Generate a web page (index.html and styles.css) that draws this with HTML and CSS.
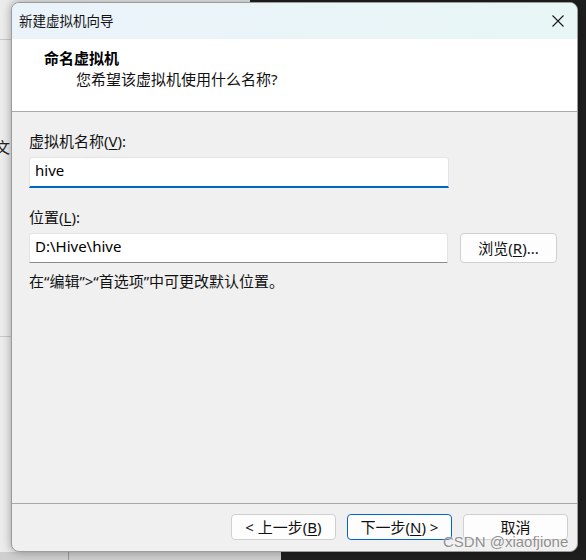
FILE: index.html
```html
<!DOCTYPE html>
<html lang="zh-CN">
<head>
<meta charset="utf-8">
<title>新建虚拟机向导</title>
<link rel="stylesheet" href="styles.css">
</head>
<body>
<div class="desktop">
  <span class="bg-char">文</span>
  <div class="dialog">
    <div class="titlebar">
      <span class="title">新建虚拟机向导</span>
      <svg class="close" width="12" height="12" viewBox="0 0 12 12"><path d="M0.5 0.5L11.5 11.5M11.5 0.5L0.5 11.5" stroke="#1a1a1a" stroke-width="1.1" fill="none"/></svg>
    </div>
    <div class="header">
      <div class="h-title">命名虚拟机</div>
      <div class="h-sub">您希望该虚拟机使用什么名称?</div>
    </div>
    <div class="content">
      <div class="field-label">虚拟机名称(<u>V</u>):</div>
      <div class="input input-active">hive</div>
      <div class="field-label loc-label">位置(<u>L</u>):</div>
      <div class="loc-row">
        <div class="input input-loc">D:\Hive\hive</div>
        <div class="btn btn-browse">浏览(<u>R</u>)...</div>
      </div>
      <div class="hint">在“编辑”&gt;“首选项”中可更改默认位置。</div>
    </div>
    <div class="footer">
      <div class="btn btn-foot">&lt; 上一步(<u>B</u>)</div>
      <div class="btn btn-foot btn-default">下一步(<u>N</u>) &gt;</div>
      <div class="btn btn-foot">取消</div>
    </div>
  </div>
  <div class="watermark">CSDN @xiaofjione</div>
</div>
</body>
</html>
```

FILE: styles.css
```css
* { box-sizing: border-box; }
html, body { margin: 0; padding: 0; }
body {
  font-family: "Noto Sans", "Noto Sans CJK SC", sans-serif;
  font-size: 15px;
  color: #000;
}
.desktop {
  position: relative;
  width: 586px;
  height: 560px;
  overflow: hidden;
  padding: 2px 0 0 11px;
  background:
    linear-gradient(#9a9a9a, #9a9a9a) 68px 552px / 1px 8px no-repeat,
    linear-gradient(#cfcfcf, #cfcfcf) 0 552px / 281px 8px no-repeat,
    linear-gradient(#c9c9c9, #c9c9c9) 0 39px / 12px 1px no-repeat,
    linear-gradient(#c9c9c9, #c9c9c9) 0 336px / 12px 1px no-repeat,
    linear-gradient(#ececec, #ececec) 0 0 / 250px 552px no-repeat,
    #1f1f1f;
}
.bg-char {
  position: absolute;
  left: -5px;
  top: 137px;
  font-family: "Noto Sans CJK SC", sans-serif;
  font-size: 15px;
  line-height: 20px;
  color: #222;
}
.dialog {
  position: relative;
  width: 567px;
  height: 550px;
  border: 1px solid #9c9c9c;
  border-radius: 8px;
  background: #f0f0f0;
  box-shadow: 0 0 10px rgba(0, 0, 0, 0.35);
  display: flex;
  flex-direction: column;
  overflow: hidden;
}
.titlebar {
  height: 36px;
  flex: none;
  display: flex;
  align-items: center;
  justify-content: space-between;
  padding: 0 13px 2px 7px;
  background: linear-gradient(90deg, #ebf3fa, #e8f6f6);
}
.title {
  font-family: "Noto Sans CJK SC", sans-serif;
  font-size: 13.5px;
  line-height: 20px;
  color: #111;
}
.close { display: block; margin-top: 2px; }
.header {
  height: 73px;
  flex: none;
  background: #fff;
  border-bottom: 1px solid #a9a9a9;
  padding: 9px 0 0 32px;
}
.h-title {
  font-family: "Noto Sans CJK SC", sans-serif;
  font-weight: 700;
  font-size: 15px;
  line-height: 20px;
}
.h-sub {
  margin-top: 1px;
  padding-left: 32px;
  font-size: 15px;
  line-height: 20px;
  color: #111;
}
.content {
  flex: 1;
  padding: 19px 20px 0 17px;
}
.field-label {
  line-height: 20px;
  color: #111;
}
u { text-decoration-thickness: 1px; text-underline-offset: 2px; }
.input {
  height: 31px;
  width: 420px;
  margin-top: 6px;
  background: #fff;
  padding: 0 5px 5px;
  display: flex;
  align-items: center;
  line-height: 20px;
  border: 1px solid #e4e4e4;
  border-bottom: 2px solid #0067c0;
  border-radius: 3px 3px 0 0;
}
.loc-label { margin-top: 19px; }
.loc-row {
  display: flex;
  gap: 12px;
  margin-top: 6px;
}
.input-loc {
  margin-top: 0;
  width: 419px;
  height: 30px;
  border-bottom: 1px solid #8a8a8a;
  padding-bottom: 5px;
}
.btn {
  display: flex;
  align-items: center;
  justify-content: center;
  background: #fdfdfd;
  border: 1px solid #d0d0d0;
  border-radius: 4px;
  line-height: 20px;
  color: #111;
}
.btn-browse {
  width: 97px;
  height: 30px;
}
.hint {
  margin-top: 8px;
  line-height: 20px;
  color: #111;
}
.footer {
  height: 48px;
  flex: none;
  border-top: 1px solid #a9a9a9;
  display: flex;
  justify-content: flex-end;
  gap: 11px;
  padding: 10px 9px 0 0;
}
.btn-foot {
  width: 105px;
  height: 26px;
}
.btn-default {
  border-color: #0067c0;
}
.watermark {
  position: absolute;
  left: 443px;
  top: 532px;
  white-space: nowrap;
  font-family: "Liberation Sans", Arial, sans-serif;
  font-size: 15px;
  line-height: 20px;
  color: rgba(130, 130, 130, 0.9);
  text-shadow: 0 0 2px rgba(255, 255, 255, 0.95);
}
```
